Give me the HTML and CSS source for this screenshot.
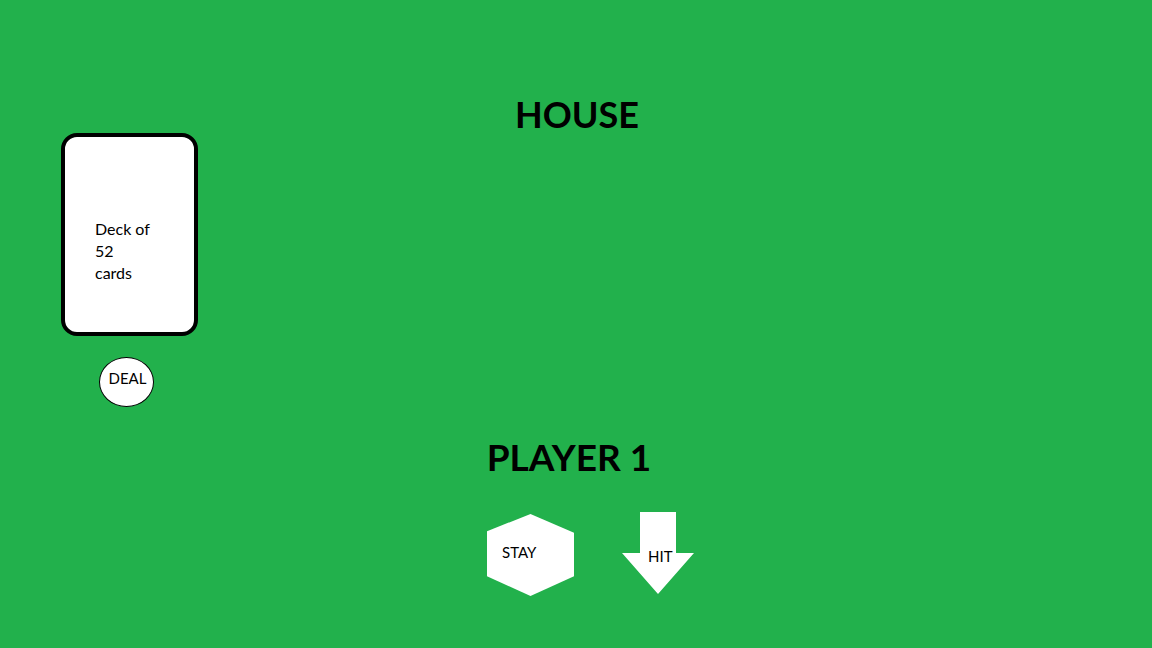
FILE: index.html
```html
<!DOCTYPE html>
<html>
<head>
<meta charset="utf-8">
<link rel="stylesheet" href="styles.css">
</head>
<body>
<div class="table">
  <div class="top">
    <h1 class="house">HOUSE</h1>
    <div class="deck-col">
      <div class="deck">
        <div class="deck-text">Deck of<br>52<br>cards</div>
      </div>
      <div class="deal"><span>DEAL</span></div>
    </div>
  </div>
  <h1 class="player">PLAYER 1</h1>
  <div class="actions">
    <div class="stay"><span>STAY</span></div>
    <div class="hit"><span>HIT</span></div>
  </div>
</div>
</body>
</html>
```

FILE: styles.css
```css
html, body {
  margin: 0;
  padding: 0;
}
body {
  background: #22b14c;
  font-family: Lato, "Open Sans", "Liberation Sans", sans-serif;
  color: #000;
}
.table {
  width: 1152px;
  height: 648px;
  background: #22b14c;
  display: flex;
  flex-direction: column;
  overflow: hidden;
}
.top {
  display: grid;
}
.house {
  grid-area: 1 / 1;
  justify-self: center;
  align-self: start;
  margin: 95px 0 0 2px;
  font-size: 36px;
  line-height: 38px;
  font-weight: 700;
}
.deck-col {
  grid-area: 1 / 1;
  justify-self: start;
  margin: 133px 0 0 61px;
  display: flex;
  flex-direction: column;
}
.deck {
  width: 129px;
  height: 195px;
  border: 4px solid #000;
  border-radius: 16px;
  background: #fff;
  box-sizing: content-box;
}
.deck-text {
  padding: 81px 0 0 30px;
  font-size: 16px;
  line-height: 22px;
}
.deal {
  margin: 21px 0 0 38px;
  width: 53px;
  height: 48px;
  border: 1px solid #000;
  border-radius: 50%;
  background: #fff;
  display: flex;
  align-items: center;
  justify-content: center;
  font-size: 15px;
  box-sizing: content-box;
}
.deal span {
  margin: -8px 0 0 2px;
}
.player {
  margin: 31px 0 0 0;
  padding-right: 14px;
  text-align: center;
  font-size: 37px;
  line-height: 38px;
  font-weight: 700;
}
.actions {
  margin-top: 36px;
  display: flex;
  justify-content: center;
  align-items: flex-start;
  gap: 48px;
  padding-left: 29px;
}
.stay {
  margin-top: 2px;
  width: 87px;
  height: 82px;
  background: #fff;
  clip-path: polygon(50% 0, 100% 23%, 100% 76%, 50% 100%, 0 76%, 0 21%);
  display: flex;
  align-items: center;
  font-size: 15px;
  padding-left: 15px;
  box-sizing: border-box;
}
.stay span {
  margin-top: -6px;
}
.hit {
  width: 72px;
  height: 82px;
  background: #fff;
  clip-path: polygon(25% 0, 75% 0, 75% 50%, 100% 50%, 50% 100%, 0 50%, 25% 50%);
  display: flex;
  align-items: center;
  font-size: 15px;
  padding-left: 26px;
  box-sizing: border-box;
}
.hit span {
  margin-top: 6px;
}
```
